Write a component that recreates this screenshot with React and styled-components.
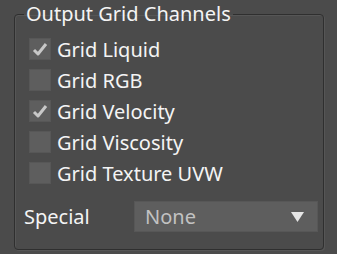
import React from "react";
import styled, { createGlobalStyle } from "styled-components";

const Global = createGlobalStyle`
  html, body { margin: 0; padding: 0; background: #4b4b4b; }
  body { font-family: "Noto Sans", "Open Sans", sans-serif; }
`;

const Page = styled.div`
  width: 337px;
  height: 254px;
  background: #4b4b4b;
  padding: 2px 13px 0 14px;
  box-sizing: border-box;
`;

const Frame = styled.fieldset`
  margin: 0;
  width: 310px;
  height: 248px;
  box-sizing: border-box;
  border: 1px solid #2f2f2f;
  border-radius: 4px;
  box-shadow: inset 1px 1px 0 #565656, 1px 1px 0 #565656;
  padding: 12px 5px 0 9px;
  display: flex;
  flex-direction: column;
`;

const Legend = styled.legend`
  margin-left: 0;
  padding: 0 2px;
  font-size: 20px;
  line-height: 24px;
  color: #f4f4f4;
`;

const List = styled.div`
  display: flex;
  flex-direction: column;
  gap: 9px;
  padding-left: 5px;
`;

const Row = styled.label`
  display: flex;
  align-items: center;
  gap: 6px;
  height: 22px;
  font-size: 20px;
  color: #f4f4f4;
`;

const Box = styled.span`
  width: 22px;
  height: 22px;
  flex: none;
  box-sizing: border-box;
  background: #5e5e5e;
  border: 1px solid #575757;
  display: flex;
  align-items: center;
  justify-content: center;
`;

const SpecialRow = styled.div`
  display: flex;
  align-items: center;
  margin-top: 17px;
`;

const SpecialLabel = styled.span`
  width: 110px;
  font-size: 20px;
  color: #f4f4f4;
`;

const Select = styled.div`
  width: 184px;
  height: 31px;
  box-sizing: border-box;
  background: #5e5e5e;
  border: 1px solid #575757;
  display: flex;
  align-items: center;
  justify-content: space-between;
  padding: 0 13px 0 10px;
  font-size: 20px;
  color: #c2c2c2;
`;

const Check = () => (
  <svg width="18" height="18" viewBox="0 0 18 18">
    <path d="M3 10 L7 14 L15 4" fill="none" stroke="#c8c8c8" strokeWidth="3" strokeLinejoin="round" />
  </svg>
);

const Caret = () => (
  <svg width="13" height="10" viewBox="0 0 13 10">
    <path d="M0 0 H13 L6.5 10 Z" fill="#e6e6e6" />
  </svg>
);

const items = [
  { label: "Grid Liquid", checked: true },
  { label: "Grid RGB", checked: false },
  { label: "Grid Velocity", checked: true },
  { label: "Grid Viscosity", checked: false },
  { label: "Grid Texture UVW", checked: false },
];

export default function App() {
  return (
    <>
      <Global />
      <Page>
        <Frame>
          <Legend>Output Grid Channels</Legend>
          <List>
            {items.map((it) => (
              <Row key={it.label}>
                <Box>{it.checked && <Check />}</Box>
                {it.label}
              </Row>
            ))}
          </List>
          <SpecialRow>
            <SpecialLabel>Special</SpecialLabel>
            <Select>
              None
              <Caret />
            </Select>
          </SpecialRow>
        </Frame>
      </Page>
    </>
  );
}
